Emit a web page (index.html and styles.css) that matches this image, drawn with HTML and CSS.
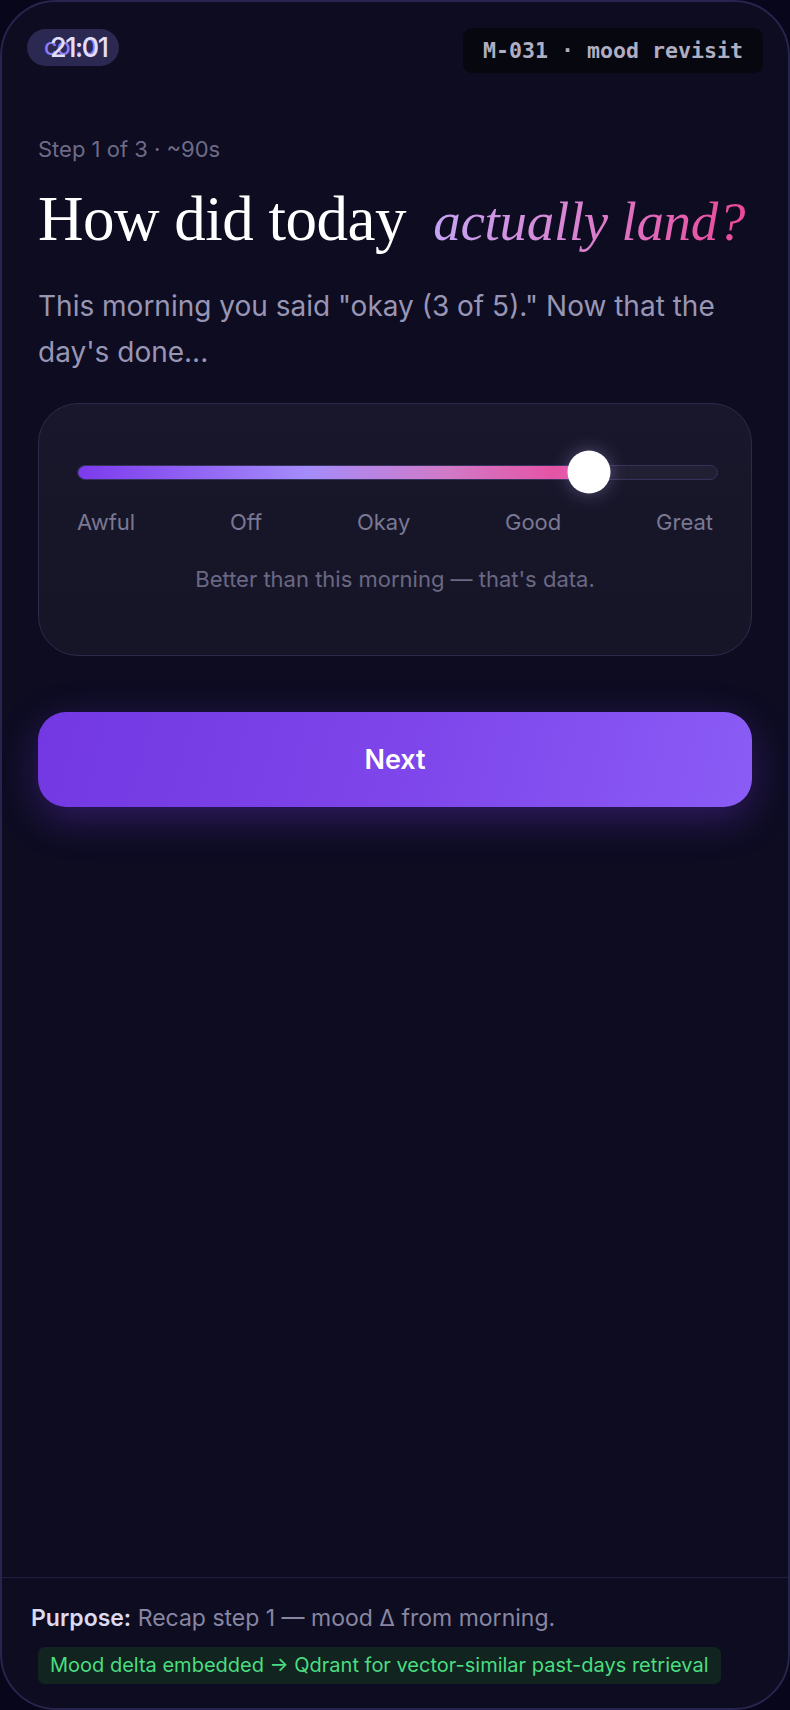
FILE: index.html
```html
<!DOCTYPE html>
<html lang="en">
<head>
<meta charset="utf-8">
<title>Mood revisit</title>
<link rel="stylesheet" href="styles.css">
</head>
<body>
<div class="phone">
  <div class="status">
    <div class="time-pill">
      <span class="time-under">col:0</span>
      <span class="time">21:01</span>
    </div>
    <div class="tag">M-031 · mood revisit</div>
  </div>

  <main class="content">
    <div class="step">Step 1 of 3 · ~90s</div>
    <h1 class="title">How did today <em class="accent">actually land?</em></h1>
    <p class="lead">This morning you said "okay (3 of 5)." Now that the day's done...</p>

    <section class="card">
      <div class="slider">
        <div class="track">
          <div class="fill" style="width: 79.8%"></div>
        </div>
        <div class="thumb" style="left: 79.8%"></div>
      </div>
      <div class="labels">
        <span>Awful</span>
        <span>Off</span>
        <span>Okay</span>
        <span>Good</span>
        <span>Great</span>
      </div>
      <p class="caption">Better than this morning — that's data.</p>
    </section>

    <button class="next">Next</button>
  </main>

  <footer class="footer">
    <p class="purpose"><strong>Purpose:</strong> Recap step 1 — mood Δ from morning.</p>
    <div class="badge">Mood delta embedded → Qdrant for vector-similar past-days retrieval</div>
  </footer>
</div>
</body>
</html>
```

FILE: styles.css
```css
* { box-sizing: border-box; }

html, body {
  margin: 0;
  padding: 0;
  background: #07061a;
}

body {
  font-family: Inter, "Noto Sans", sans-serif;
  width: 790px;
  height: 1710px;
}

.phone {
  width: 790px;
  height: 1710px;
  border: 2px solid #27244d;
  border-radius: 56px;
  background: #0d0c21;
  display: flex;
  flex-direction: column;
  overflow: hidden;
}

/* status bar */
.status {
  display: flex;
  justify-content: space-between;
  align-items: flex-start;
  padding: 26px 25px 0 25px;
}

.time-pill {
  width: 92px;
  height: 37px;
  margin-top: 1px;
  border-radius: 19px;
  background: #2b2852;
  display: grid;
  align-items: center;
  padding-left: 17px;
}

.time-under,
.time {
  grid-area: 1 / 1;
  line-height: 37px;
  white-space: nowrap;
}

.time-under {
  font-size: 23px;
  font-weight: 500;
  color: #8b7cf6;
  letter-spacing: -0.5px;
}

.time {
  margin-left: 6px;
  font-size: 27px;
  font-weight: 500;
  color: #e2def8;
  letter-spacing: -1.4px;
}

.tag {
  height: 45px;
  padding: 0 20px;
  border-radius: 9px;
  background: #07070f;
  color: #b0aec2;
  font-family: "DejaVu Sans Mono", "Liberation Mono", monospace;
  font-weight: bold;
  font-size: 21.6px;
  line-height: 45px;
  white-space: nowrap;
}

/* content */
.content {
  padding: 0 36px;
  display: flex;
  flex-direction: column;
}

.step {
  margin-top: 63px;
  font-size: 22px;
  line-height: 26px;
  color: #6d6b87;
}

.title {
  margin: 20px 0 0;
  font-family: "Liberation Serif", "Times New Roman", serif;
  font-weight: normal;
  font-size: 63px;
  line-height: 74px;
  color: #ffffff;
  letter-spacing: -0.5px;
  white-space: nowrap;
}

.accent {
  margin-left: 12px;
  font-size: 55px;
  font-style: italic;
  letter-spacing: -0.3px;
  background: linear-gradient(90deg, #c6a3f3 0%, #d884d2 45%, #ec4899 100%);
  -webkit-background-clip: text;
  background-clip: text;
  color: transparent;
}

.lead {
  margin: 24px 0 0;
  font-size: 28px;
  line-height: 46px;
  color: #9896b4;
}

/* card */
.card {
  margin-top: 28px;
  border: 1.5px solid #2c2a48;
  border-radius: 40px;
  background: linear-gradient(180deg, #18172b 0%, #161527 100%);
  padding: 46px 38px 62px;
}

.slider {
  position: relative;
  height: 44px;
  display: flex;
  align-items: center;
  margin-right: -5px;
}

.track {
  flex: 1;
  height: 15px;
  border-radius: 8px;
  border: 1px solid #35325c;
  background: #211f33;
  overflow: hidden;
}

.fill {
  height: 100%;
  border-radius: 8px;
  background: linear-gradient(90deg, #7c3aed 0%, #a48cfa 45%, #d07ac8 72%, #ec4899 100%);
}

.thumb {
  position: absolute;
  top: 50%;
  width: 43px;
  height: 43px;
  border-radius: 50%;
  background: #ffffff;
  transform: translate(-50%, -50%);
  box-shadow: 0 0 18px rgba(196, 178, 255, 0.35);
}

.labels {
  margin-top: 15px;
  display: flex;
  justify-content: space-between;
  font-size: 22px;
  line-height: 26px;
  color: #7a7892;
}

.caption {
  margin: 30px 0 0;
  text-align: center;
  font-size: 22px;
  line-height: 28px;
  color: #6a6884;
}

/* button */
.next {
  margin-top: 56px;
  height: 95px;
  border: 0;
  border-radius: 28px;
  background: linear-gradient(105deg, #7338e2 0%, #7d45ea 50%, #8b5cf6 100%);
  box-shadow: 0 12px 40px rgba(124, 58, 237, 0.32);
  color: #ffffff;
  font-family: Inter, "Noto Sans", sans-serif;
  font-size: 27px;
  font-weight: 600;
  cursor: pointer;
}

/* footer */
.footer {
  margin-top: auto;
  border-top: 1.5px solid #1f1d3c;
  padding: 26px 29px 24px;
}

.purpose {
  margin: 0;
  font-size: 23px;
  line-height: 28px;
  color: #8886a2;
}

.purpose strong {
  font-weight: 600;
  color: #dcdaf0;
}

.badge {
  display: inline-block;
  margin: 15px 0 0 7px;
  height: 37px;
  padding: 0 12px;
  border-radius: 7px;
  background: #12241f;
  color: #4ade80;
  font-size: 20px;
  line-height: 37px;
  white-space: nowrap;
}
```
